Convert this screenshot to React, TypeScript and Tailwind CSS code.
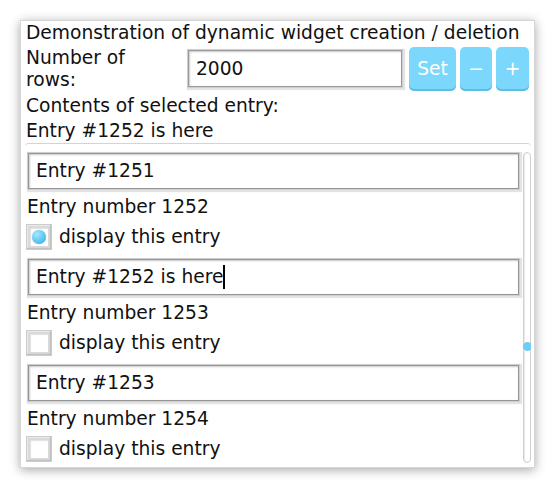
import { useState } from 'react';

const font = { fontFamily: '"DejaVu Sans", "Liberation Sans", sans-serif' };

function Field({ value, cursor }: { value: string; cursor?: boolean }) {
  return (
    <div className="h-[36px] w-[491px] ml-[2px] mt-[1px] flex items-center pl-[7px] bg-white border border-[#969696] shadow-[inset_1px_1px_2px_rgba(0,0,0,0.22),0_0_0_1px_#cfcfcf,1px_1px_1px_2px_#e3e3e3]">
      <span>{value}</span>
      {cursor && <span className="w-[2px] h-[24px] bg-black" />}
    </div>
  );
}

function Check({ checked }: { checked: boolean }) {
  return (
    <div className="flex items-center h-[26px]">
      <div className="w-[26px] h-[26px] flex items-center justify-center bg-[#d9d9d9] border border-[#cccccc] shadow-[inset_-1px_-1px_1px_#bdbdbd,inset_1px_1px_1px_#eaeaea]">
        <div className="w-[18px] h-[18px] bg-white flex items-center justify-center shadow-[inset_1px_1px_1px_rgba(0,0,0,0.12)]">
          {checked && (
            <div className="w-[14px] h-[14px] rounded-full bg-[radial-gradient(circle_at_35%_30%,#a8e6ff,#5cc8f5_55%,#2fa6d8)] shadow-[0_0_1px_rgba(0,0,0,0.4)]" />
          )}
        </div>
      </div>
      <span className="ml-[7px]">display this entry</span>
    </div>
  );
}

function Entry({ n, value, checked, cursor }: { n: number; value: string; checked: boolean; cursor?: boolean }) {
  return (
    <div className="flex flex-col">
      <Field value={value} cursor={cursor} />
      <div className="mt-[6px] leading-[24px] h-[24px] pl-[1px]">Entry number {n}</div>
      <div className="mt-[5px] mb-[8px]">
        <Check checked={checked} />
      </div>
    </div>
  );
}

function BlueButton({ label, w }: { label: string; w: string }) {
  return (
    <button
      className={`${w} h-[44px] rounded-[5px] bg-[#7bd7fb] text-white text-[18.67px] flex items-center justify-center shadow-[inset_0_-2px_0_rgba(40,140,190,0.35)]`}
    >
      {label}
    </button>
  );
}

export default function App() {
  const [rows] = useState('2000');

  const entries = [
    { n: 1252, value: 'Entry #1251', checked: true },
    { n: 1253, value: 'Entry #1252 is here', checked: false, cursor: true },
    { n: 1254, value: 'Entry #1253', checked: false },
  ];

  return (
    <div className="w-[555px] h-[489px] bg-white pt-[20px] pl-[20px]" style={font}>
      <div className="w-[515px] h-[448px] bg-white border border-[#d6d6d6] shadow-[0_2px_10px_rgba(0,0,0,0.35)] flex flex-col pl-[5px] pr-[4px] overflow-hidden text-[18.67px] text-[#111]">
        <div className="h-[24px] leading-[24px] whitespace-nowrap">
          Demonstration of dynamic widget creation / deletion
        </div>

        <div className="mt-[2px] h-[44px] flex items-start">
          <div className="w-[162px] leading-[22px]">
            Number of
            <br />
            rows:
          </div>
          <div className="mt-[3px] h-[37px] w-[214px] flex items-center pl-[7px] bg-white border border-[#9a9a9a] shadow-[inset_1px_1px_2px_rgba(0,0,0,0.22),0_0_0_1px_#cfcfcf,1px_1px_1px_2px_#e3e3e3]">
            {rows}
          </div>
          <div className="ml-[7px] flex gap-[4px]">
            <BlueButton label="Set" w="w-[47px]" />
            <BlueButton label="−" w="w-[32px]" />
            <BlueButton label="+" w="w-[33px]" />
          </div>
        </div>

        <div className="mt-[2px] leading-[25px]">Contents of selected entry:</div>
        <div className="leading-[25px]">Entry #1252 is here</div>

        <div className="flex-1 -ml-[1px] -mr-[1px] border-t border-[#d4d4d4] rounded-t-[4px] flex pt-[8px] pl-[1px] overflow-hidden">
          <div className="flex flex-col flex-1">
            {entries.map((e) => (
              <Entry key={e.n} {...e} />
            ))}
          </div>
          <div className="relative w-[8px] h-[311px] ml-[1px] rounded-full border border-[#d0d0d0] bg-white shadow-[inset_1px_0_1px_#e8e8e8]">
            <div className="absolute left-[-1px] top-[189px] w-[9px] h-[9px] rounded-full bg-[#6ccdf6]" />
          </div>
        </div>
      </div>
    </div>
  );
}
